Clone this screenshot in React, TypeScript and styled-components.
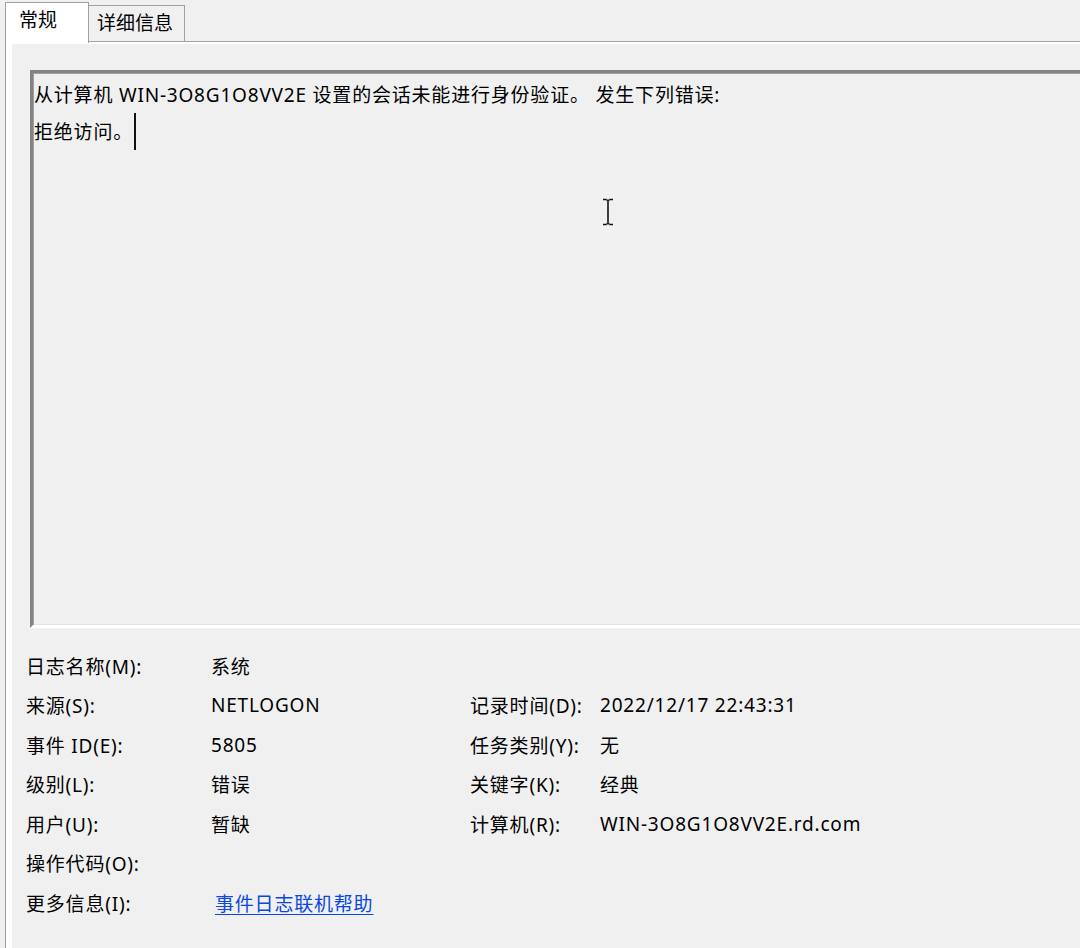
import React from 'react';
import styled, { createGlobalStyle } from 'styled-components';

const GlobalStyle = createGlobalStyle`
  html, body {
    margin: 0;
    padding: 0;
    background: #f0f0f0;
    overflow: hidden;
  }
  body {
    font-family: "Noto Sans", "Noto Sans CJK SC", sans-serif;
    font-size: 19px;
    letter-spacing: 0.8px;
    color: #000;
  }
`;

const Window = styled.div`
  width: 1080px;
  height: 948px;
  padding-left: 5px;
  box-sizing: border-box;
  display: flex;
  flex-direction: column;
  overflow: hidden;
`;

const TabStrip = styled.div`
  height: 41px;
  display: flex;
  align-items: flex-end;
`;

const Tab = styled.div<{ active?: boolean }>`
  box-sizing: border-box;
  height: ${p => (p.active ? '41px' : '36px')};
  margin-bottom: ${p => (p.active ? '-2px' : '0')};
  margin-left: ${p => (p.active ? '0' : '-1px')};
  padding: ${p => (p.active ? '4px 0 0 13px' : '4px 0 0 8px')};
  width: ${p => (p.active ? '84px' : '97px')};
  background: ${p => (p.active ? '#ffffff' : '#f0f0f0')};
  border: 1px solid #a0a0a0;
  border-bottom: none;
  position: relative;
  z-index: ${p => (p.active ? 2 : 1)};
  line-height: 26px;
  letter-spacing: 0;
`;

const Panel = styled.div`
  flex: 1;
  display: flex;
  background: #ffffff;
  border-top: 1px solid #a0a0a0;
  border-left: 1px solid #a0a0a0;
  padding: 2px 0 0 6px;
`;

const Page = styled.div`
  flex: 1;
  background: #f0f0f0;
  padding: 26px 0 0 14px;
  display: flex;
  flex-direction: column;
  overflow: hidden;
`;

const MessageBox = styled.div`
  position: relative;
  margin-left: 4px;
  width: 1100px;
  height: 558px;
  box-sizing: border-box;
  border-style: solid;
  border-width: 3px 0 3px 3px;
  border-color: #838383 transparent #ffffff #838383;
  box-shadow: inset 1px 1px 0 #a0a0a0, inset 0 -1px 0 #e3e3e3;
  background: #f0f0f0;
  padding: 4px 0 0 1px;
  line-height: 36px;
`;

const Line = styled.div`
  white-space: pre;
  display: flex;
  align-items: center;
`;

const Caret = styled.span`
  display: inline-block;
  width: 2px;
  height: 37px;
  margin-left: 1px;
  background: #111;
`;

const IBeam = styled.svg`
  position: absolute;
  left: 568px;
  top: 125px;
`;

const Fields = styled.div`
  margin-top: 18px;
  display: grid;
  grid-template-columns: 185px 259px 130px 1fr;
  grid-auto-rows: 39.5px;
  align-items: center;
`;

const Cell = styled.div`
  white-space: nowrap;
`;

const HelpLink = styled.a`
  margin-left: 4px;
  color: #0a47e0;
  text-decoration: underline;
  text-underline-offset: 3px;
  cursor: pointer;
`;

const rows: [string, React.ReactNode, string, string][] = [
  ['日志名称(M):', '系统', '', ''],
  ['来源(S):', 'NETLOGON', '记录时间(D):', '2022/12/17 22:43:31'],
  ['事件 ID(E):', '5805', '任务类别(Y):', '无'],
  ['级别(L):', '错误', '关键字(K):', '经典'],
  ['用户(U):', '暂缺', '计算机(R):', 'WIN-3O8G1O8VV2E.rd.com'],
  ['操作代码(O):', '', '', ''],
  ['更多信息(I):', <HelpLink>事件日志联机帮助</HelpLink>, '', ''],
];

export default function App() {
  return (
    <>
      <GlobalStyle />
      <Window>
        <TabStrip>
          <Tab active>常规</Tab>
          <Tab>详细信息</Tab>
        </TabStrip>
        <Panel>
          <Page>
            <MessageBox>
              <Line>从计算机 WIN-3O8G1O8VV2E 设置的会话未能进行身份验证。 发生下列错误:</Line>
              <Line>
                拒绝访问。
                <Caret />
              </Line>
              <IBeam width="14" height="28" viewBox="0 0 14 28">
                <path d="M2 1.5h3.5M8.5 1.5H12M7 2v24M2 26.5h3.5M8.5 26.5H12" stroke="#111" strokeWidth="1.6" fill="none" />
                <path d="M5 2h4M5 26h4" stroke="#111" strokeWidth="1.2" fill="none" />
              </IBeam>
            </MessageBox>
            <Fields>
              {rows.map((r, i) => (
                <React.Fragment key={i}>
                  <Cell>{r[0]}</Cell>
                  <Cell>{r[1]}</Cell>
                  <Cell>{r[2]}</Cell>
                  <Cell>{r[3]}</Cell>
                </React.Fragment>
              ))}
            </Fields>
          </Page>
        </Panel>
      </Window>
    </>
  );
}
